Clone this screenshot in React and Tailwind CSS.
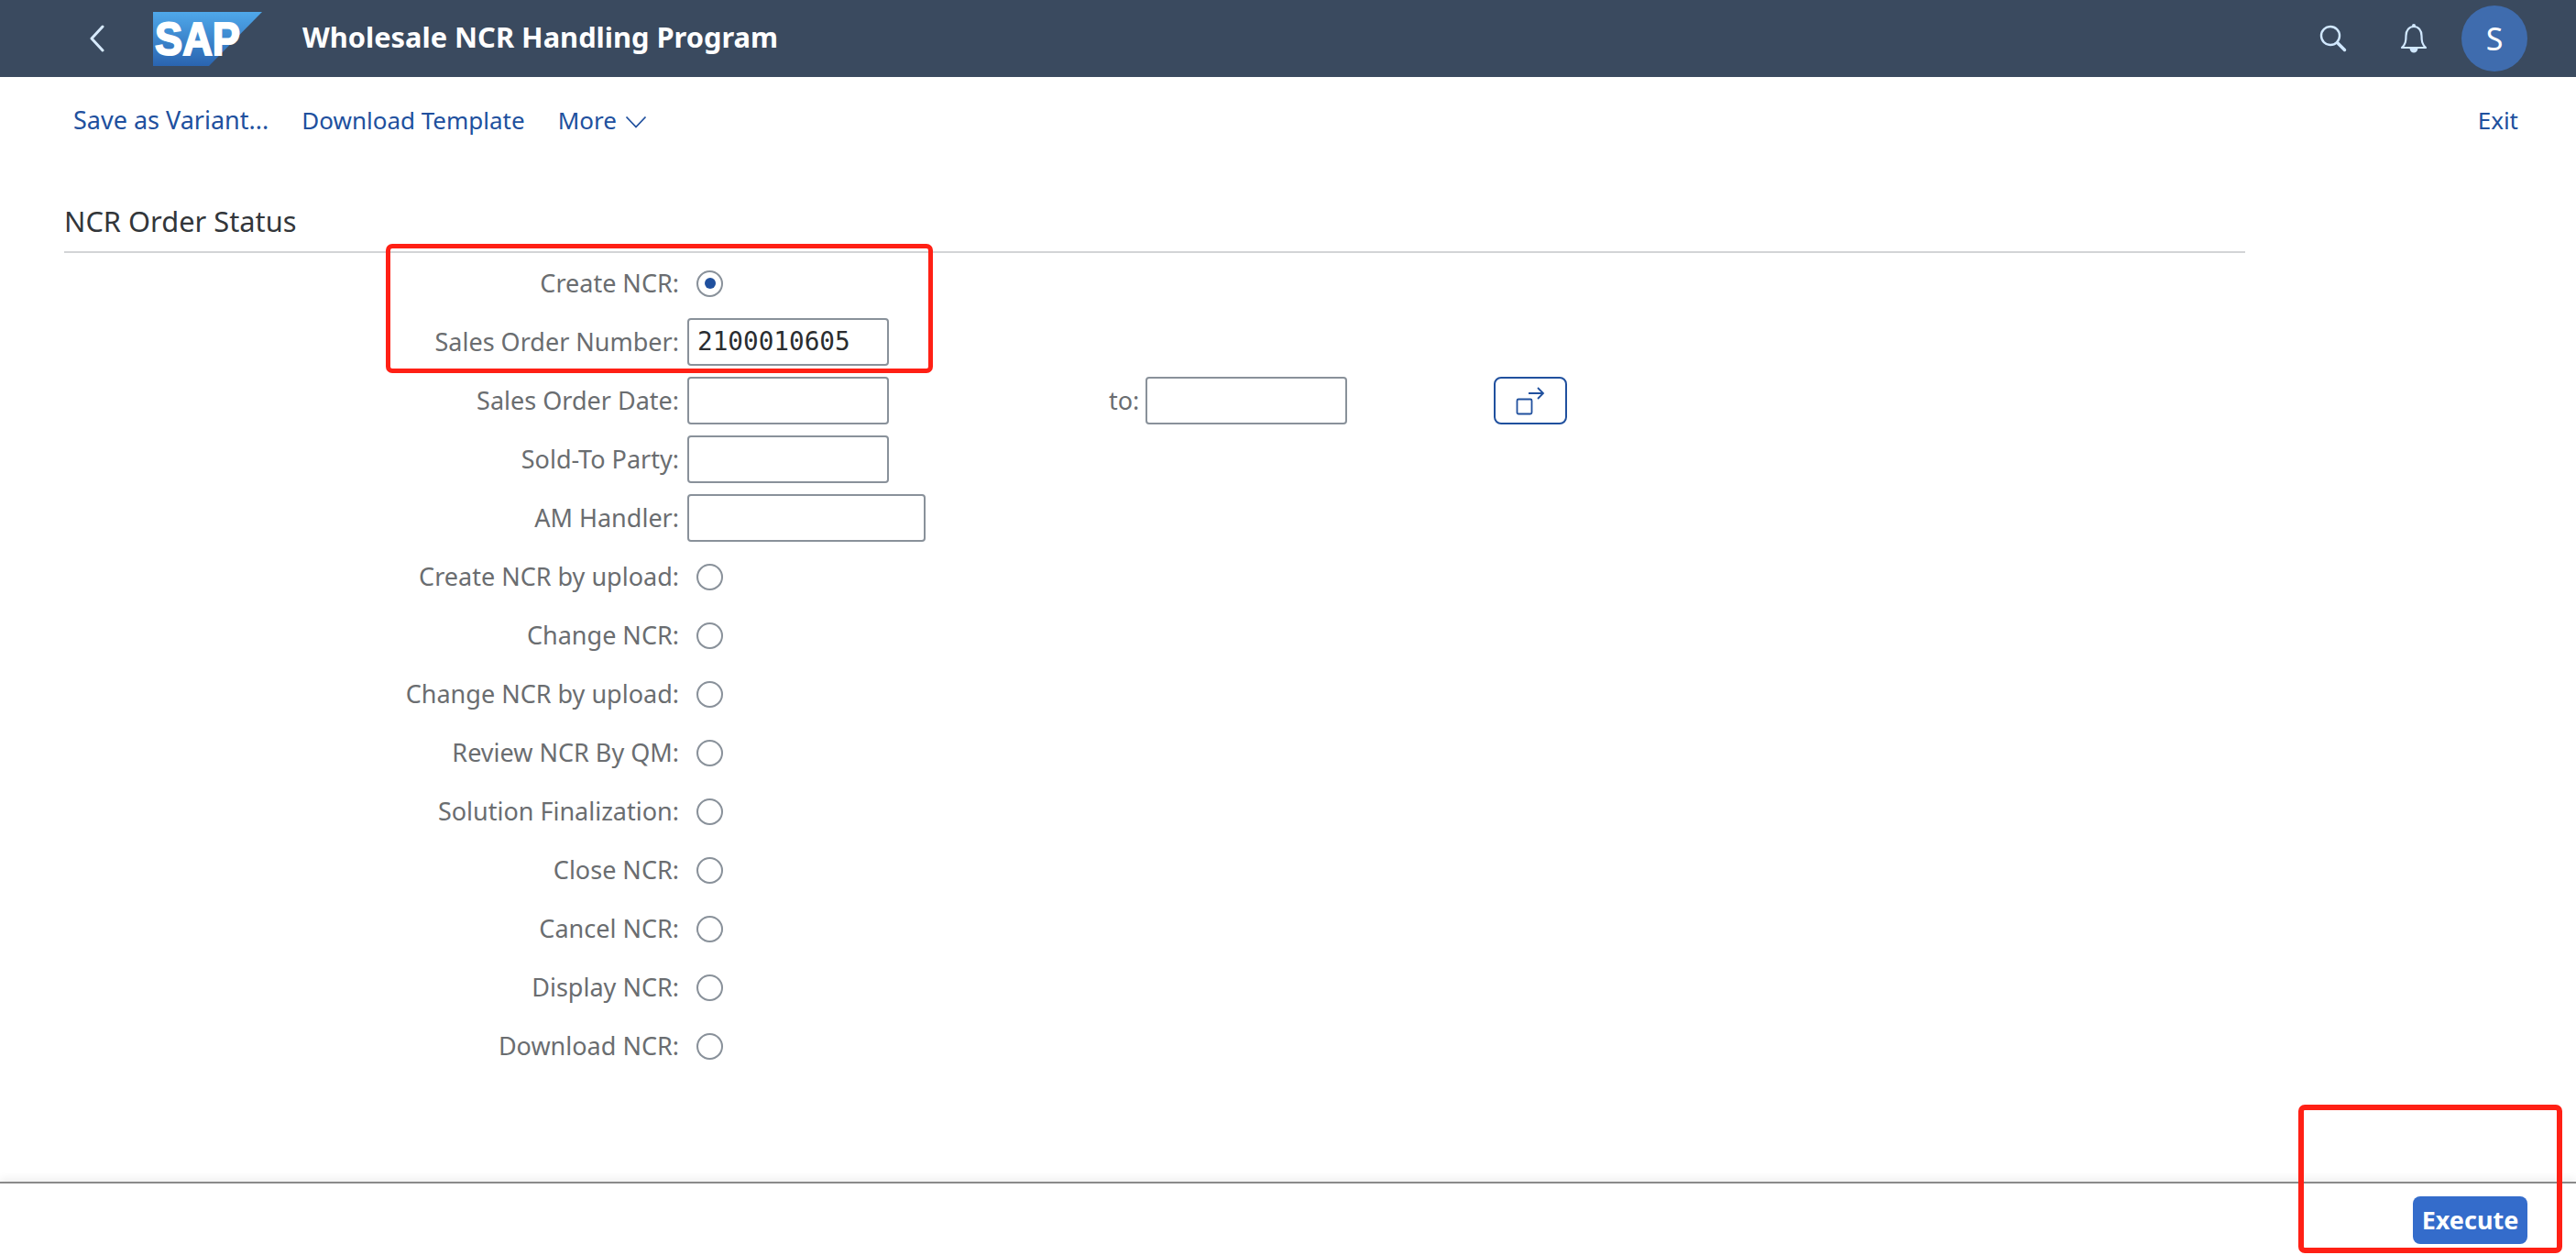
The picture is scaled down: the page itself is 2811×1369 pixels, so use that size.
import React from "react";

const font = { fontFamily: '"Noto Sans", Arial, sans-serif' };

function Logo() {
  return (
    <svg width="120" height="60" viewBox="0 0 120 60" className="ml-[52px] mt-[1px] shrink-0">
      <defs>
        <linearGradient id="sapg" x1="0" y1="0" x2="0" y2="1">
          <stop offset="0" stopColor="#4fa8ea" />
          <stop offset="1" stopColor="#2a64b0" />
        </linearGradient>
      </defs>
      <polygon points="0,0 119,0 61,59 0,59" fill="url(#sapg)" />
      <text x="2" y="47" fontFamily="Liberation Sans" fontWeight="700" fontSize="50" fill="#fff" stroke="#fff" strokeWidth="2" textLength="93" lengthAdjust="spacingAndGlyphs">SAP</text>
    </svg>
  );
}

function Field({ w = "w-[220px]", value }) {
  return (
    <div className={`${w} h-[52px] shrink-0 border-2 border-[#89919a] rounded-[4px] bg-white flex items-center pl-[9px] text-[27.7px] text-[#2a2d30] font-['DejaVu_Sans_Mono',monospace]`}>
      {value}
    </div>
  );
}

function Radio({ checked }) {
  return (
    <div className="ml-[10px] w-[29px] h-[29px] rounded-full border-2 border-[#89919a] bg-white flex items-center justify-center">
      {checked && <div className="w-[12px] h-[12px] rounded-full bg-[#20509e]" />}
    </div>
  );
}

function Row({ label, children }) {
  return (
    <div className="flex items-center h-16">
      <div className="w-[671px] text-right text-[27px] text-[#6a6d70] mr-[9px] shrink-0 whitespace-nowrap">{label}</div>
      {children}
    </div>
  );
}

export default function App() {
  return (
    <div style={font} className="relative flex flex-col h-[1369px] w-full overflow-hidden bg-white">
      <header className="h-[84px] shrink-0 bg-[#3a4a5f] flex items-center">
        <svg width="18" height="30" viewBox="0 0 18 30" fill="none" className="ml-[97px] shrink-0">
          <path d="M15 2 L3 15 L15 28" stroke="#d7eafc" strokeWidth="3" strokeLinecap="round" strokeLinejoin="round" />
        </svg>
        <Logo />
        <h1 className="ml-[43px] -mt-[4px] text-[30.8px] font-bold text-white whitespace-nowrap">Wholesale NCR Handling Program</h1>
        <svg width="30" height="30" viewBox="0 0 30 30" fill="none" className="ml-auto shrink-0">
          <circle cx="12" cy="12" r="10" stroke="#d1e8ff" strokeWidth="2.4" />
          <path d="M19.5 19.5 L27.5 27.5" stroke="#d1e8ff" strokeWidth="3.4" strokeLinecap="round" />
        </svg>
        <svg width="30" height="34" viewBox="0 0 30 34" fill="none" className="ml-[58px] shrink-0">
          <path d="M2 27 C6 23 6.5 20 6.5 14 C6.5 8 10 4 15 4 C20 4 23.5 8 23.5 14 C23.5 20 24 23 28 27 Z" stroke="#d1e8ff" strokeWidth="2.2" strokeLinejoin="round" />
          <circle cx="15" cy="3" r="2" fill="#d1e8ff" />
          <path d="M10.5 28 H19.5 C19 31 17 32.5 15 32.5 C13 32.5 11 31 10.5 28 Z" fill="#d1e8ff" />
        </svg>
        <div className="ml-[37px] mr-[53px] w-[72px] h-[72px] rounded-full bg-[#3f6cae] flex items-center justify-center text-white text-[34px] shrink-0">S</div>
      </header>

      <nav className="h-[94px] shrink-0 flex items-center pl-[80px] pr-[63px] text-[26px] text-[#20509e]">
        <span className="text-[27px]">Save as Variant...</span>
        <span className="ml-[36px]">Download Template</span>
        <span className="ml-[36px]">More</span>
        <svg width="24" height="14" viewBox="0 0 24 14" fill="none" className="ml-[9px] mt-[3px]">
          <path d="M1.5 1.5 L12 12.5 L22.5 1.5" stroke="#20509e" strokeWidth="1.8" />
        </svg>
        <span className="ml-auto">Exit</span>
      </nav>

      <main className="flex-1 pl-[70px]">
        <section className="w-[2380px] h-[98px] flex items-end border-b-2 border-[#d2d4d6]">
          <h2 className="text-[30.8px] text-[#32363a] pb-[10px]">NCR Order Status</h2>
        </section>
        <div className="mt-[1px]">
          <Row label="Create NCR:"><Radio checked /></Row>
          <Row label="Sales Order Number:"><Field value="2100010605" /></Row>
          <Row label="Sales Order Date:">
            <Field />
            <span className="ml-[240px] text-[27px] text-[#6a6d70] w-[40px]">to:</span>
            <Field />
            <button className="ml-[160px] w-[80px] h-[52px] border-2 border-[#20509e] rounded-[8px] flex items-center justify-center bg-white">
              <svg width="32" height="32" viewBox="0 0 32 32" fill="none">
                <rect x="1.5" y="14.5" width="16" height="16" rx="1.5" stroke="#20509e" strokeWidth="1.8" />
                <path d="M14 8 H29 M24 2 L30 8 L24 14" stroke="#20509e" strokeWidth="1.8" />
              </svg>
            </button>
          </Row>
          <Row label="Sold-To Party:"><Field /></Row>
          <Row label="AM Handler:"><Field w="w-[260px]" /></Row>
          {["Create NCR by upload:", "Change NCR:", "Change NCR by upload:", "Review NCR By QM:", "Solution Finalization:", "Close NCR:", "Cancel NCR:", "Display NCR:", "Download NCR:"].map((l) => (
            <Row key={l} label={l}><Radio /></Row>
          ))}
        </div>
      </main>

      <footer className="h-[80px] shrink-0 border-t-2 border-[#8a8a8a] flex items-center justify-end pr-[53px] shadow-[0_-4px_8px_rgba(0,0,0,0.06)]">
        <button className="w-[125px] h-[52px] mt-[2px] rounded-[8px] bg-[#346ccb] text-white text-[27px] font-bold">Execute</button>
      </footer>

      <div className="absolute left-[421px] top-[266px] w-[597px] h-[141px] border-[5px] border-[#ff2015] rounded-[7px]" />
      <div className="absolute left-[2508px] top-[1205px] w-[288px] h-[162px] border-[6px] border-[#ff2015] rounded-[7px]" />
    </div>
  );
}
